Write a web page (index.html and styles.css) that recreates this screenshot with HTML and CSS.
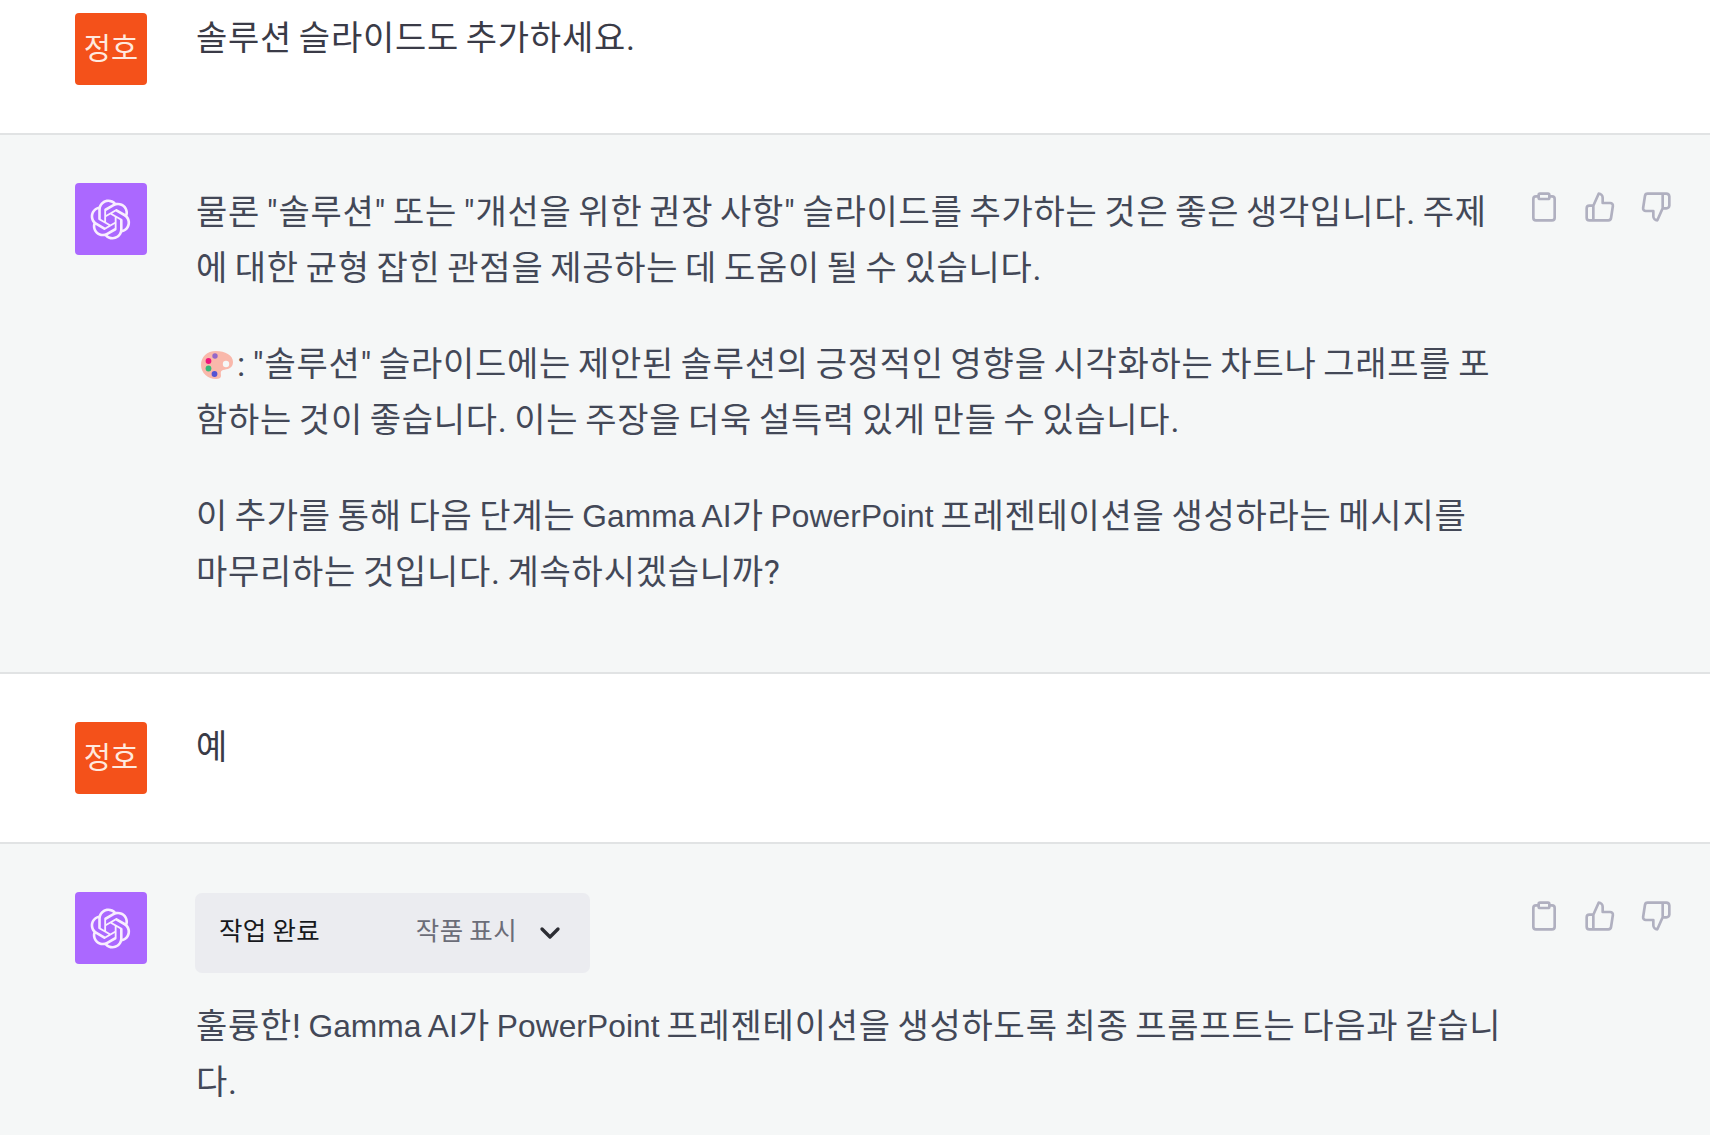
FILE: index.html
```html
<!DOCTYPE html>
<html lang="ko">
<head>
<meta charset="UTF-8">
<meta name="viewport" content="width=device-width,initial-scale=1">
<title>Gamma AI</title>
<link rel="stylesheet" href="styles.css">
</head>
<body>

<!-- shared icons -->
<svg class="defs" width="0" height="0">
	<symbol id="logo" viewBox="0 0 41 41">
		<path fill="currentColor" d="M37.5324 16.8707C37.9808 15.5241 38.1363 14.0974 37.9886 12.6859C37.8409 11.2744 37.3934 9.91076 36.676 8.68622C35.6126 6.83404 33.9882 5.3676 32.0373 4.4985C30.0864 3.62941 27.9098 3.40259 25.8215 3.85078C24.8796 2.7893 23.7219 1.94125 22.4257 1.36341C21.1295 0.785575 19.7249 0.491269 18.3058 0.500197C16.1708 0.495044 14.0893 1.16803 12.3614 2.42214C10.6335 3.67624 9.34853 5.44666 8.6917 7.47815C7.30085 7.76286 5.98686 8.3414 4.8377 9.17505C3.68854 10.0087 2.73073 11.0782 2.02839 12.312C0.956464 14.1591 0.498905 16.2988 0.721698 18.4228C0.944492 20.5467 1.83612 22.5449 3.268 24.1293C2.81966 25.4759 2.66413 26.9026 2.81182 28.3141C2.95951 29.7256 3.40701 31.0892 4.12437 32.3138C5.18791 34.1659 6.8123 35.6322 8.76321 36.5013C10.7141 37.3704 12.8907 37.5973 14.9789 37.1492C15.9208 38.2107 17.0786 39.0587 18.3747 39.6366C19.6709 40.2144 21.0755 40.5087 22.4946 40.4998C24.6307 40.5054 26.7133 39.8321 28.4418 38.5772C30.1704 37.3223 31.4556 35.5506 32.1119 33.5179C33.5027 33.2332 34.8167 32.6547 35.9659 31.821C37.115 30.9874 38.0728 29.9178 38.7752 28.684C39.8458 26.8371 40.3023 24.6979 40.0789 22.5748C39.8556 20.4517 38.9639 18.4544 37.5324 16.8707ZM22.4978 37.8849C20.7443 37.8874 19.0459 37.2733 17.6994 36.1501C17.7601 36.117 17.8666 36.0586 17.936 36.0161L25.9004 31.4156C26.1003 31.3019 26.2663 31.137 26.3813 30.9378C26.4964 30.7386 26.5563 30.5124 26.5549 30.2825V19.0542L29.9213 20.998C29.9389 21.0068 29.9541 21.0198 29.9656 21.0359C29.977 21.052 29.9842 21.0707 29.9867 21.0902V30.3889C29.9842 32.375 29.1946 34.2791 27.7909 35.6841C26.3872 37.0892 24.4838 37.8806 22.4978 37.8849ZM6.39227 31.0064C5.51397 29.4888 5.19742 27.7107 5.49804 25.9832C5.55718 26.0187 5.66048 26.0818 5.73461 26.1244L13.699 30.7248C13.8975 30.8408 14.1233 30.902 14.3532 30.902C14.583 30.902 14.8088 30.8408 15.0073 30.7248L24.731 25.1103V28.9979C24.7321 29.0177 24.7283 29.0376 24.7199 29.0556C24.7115 29.0736 24.6988 29.0893 24.6829 29.1012L16.6317 33.7497C14.9096 34.7416 12.8643 35.0097 10.9447 34.4954C9.02506 33.9811 7.38785 32.7263 6.39227 31.0064ZM4.29707 13.6194C5.17156 12.0998 6.55279 10.9364 8.19885 10.3327C8.19885 10.4013 8.19491 10.5228 8.19491 10.6071V19.808C8.19351 20.0378 8.25334 20.2638 8.36823 20.4629C8.48312 20.6619 8.64893 20.8267 8.84863 20.9404L18.5723 26.5542L15.206 28.4979C15.1894 28.5089 15.1703 28.5155 15.1505 28.5173C15.1307 28.5191 15.1107 28.516 15.0924 28.5082L7.04046 23.8557C5.32135 22.8601 4.06716 21.2235 3.55289 19.3046C3.03862 17.3858 3.30624 15.3413 4.29707 13.6194ZM31.955 20.0556L22.2312 14.4411L25.5976 12.4981C25.6142 12.4872 25.6333 12.4805 25.6531 12.4787C25.6729 12.4769 25.6928 12.4801 25.7111 12.4879L33.7631 17.1364C34.9967 17.849 36.0017 18.8982 36.6606 20.1613C37.3194 21.4244 37.6047 22.849 37.4832 24.2684C37.3617 25.6878 36.8382 27.0432 35.9743 28.1759C35.1103 29.3086 33.9415 30.1717 32.6047 30.6641C32.6047 30.5947 32.6047 30.4733 32.6047 30.3889V21.188C32.6066 20.9586 32.5474 20.7328 32.4332 20.5338C32.319 20.3348 32.154 20.1698 31.955 20.0556ZM35.3055 15.0128C35.2464 14.9765 35.1431 14.9142 35.069 14.8717L27.1045 10.2712C26.906 10.1554 26.6803 10.0943 26.4504 10.0943C26.2206 10.0943 25.9948 10.1554 25.7963 10.2712L16.0726 15.8858V11.9982C16.0715 11.9783 16.0753 11.9585 16.0837 11.9405C16.0921 11.9225 16.1048 11.9068 16.1207 11.8949L24.1719 7.25025C25.4053 6.53903 26.8158 6.19376 28.2383 6.25482C29.6608 6.31589 31.0364 6.78077 32.2044 7.59508C33.3723 8.40939 34.2842 9.53945 34.8334 10.8531C35.3826 12.1667 35.5464 13.6095 35.3055 15.0128ZM14.2424 21.9419L10.8752 19.9981C10.8576 19.9893 10.8423 19.9763 10.8309 19.9602C10.8195 19.9441 10.8122 19.9254 10.8098 19.9058V10.6071C10.8107 9.18295 11.2173 7.78848 11.9819 6.58696C12.7466 5.38544 13.8377 4.42659 15.1275 3.82264C16.4173 3.21869 17.8524 2.99464 19.2649 3.1767C20.6775 3.35876 22.0089 3.93941 23.1034 4.85067C23.0427 4.88379 22.937 4.94215 22.8668 4.98473L14.9024 9.58517C14.7025 9.69878 14.5366 9.86356 14.4215 10.0626C14.3065 10.2616 14.2466 10.4877 14.2479 10.7175L14.2424 21.9419ZM16.071 17.9991L20.4018 15.4978L24.7325 17.9975V22.9985L20.4018 25.4983L16.071 22.9985V17.9991Z"/>
	</symbol>
	<symbol id="clipboard" viewBox="0 0 24 24">
		<path d="M16 4h2a2 2 0 0 1 2 2v14a2 2 0 0 1-2 2H6a2 2 0 0 1-2-2V6a2 2 0 0 1 2-2h2"/>
		<rect x="8" y="2" width="8" height="4" rx="1" ry="1"/>
	</symbol>
	<symbol id="up" viewBox="0 0 24 24">
		<path d="M14 9V5a3 3 0 0 0-3-3l-4 9v11h11.28a2 2 0 0 0 2-1.7l1.38-9a2 2 0 0 0-2-2.3zM7 22H4a2 2 0 0 1-2-2v-7a2 2 0 0 1 2-2h3"/>
	</symbol>
	<symbol id="down" viewBox="0 0 24 24">
		<path d="M10 15v4a3 3 0 0 0 3 3l4-9V2H5.72a2 2 0 0 0-2 1.7l-1.38 9a2 2 0 0 0 2 2.3zm7-13h2.67A2.31 2.31 0 0 1 22 4v7a2.31 2.31 0 0 1-2.33 2H17"/>
	</symbol>
</svg>

<div class="row user first">
	<div class="avatar">정호</div>
	<div class="text"><p>솔루션 슬라이드도 추가하세요.</p></div>
</div>

<div class="row bot">
	<div class="avatar"><svg><use href="#logo"/></svg></div>
	<div class="text">
		<p>물론 "솔루션" 또는 "개선을 위한 권장 사항" 슬라이드를 추가하는 것은 좋은 생각입니다. 주제<br>에 대한 균형 잡힌 관점을 제공하는 데 도움이 될 수 있습니다.</p>
		<p><svg class="palette" viewBox="0 0 34 30">
			<path fill="#f9b8ab" d="M16 1C7 1 1 7 1 15c0 8 7 14 15 14 3 0 5-1 5-3 0-3-1-5 2-6 4-1 10-1 10-8C33 5 25 1 16 1z"/>
			<circle cx="26" cy="14" r="3.2" fill="#f5f7f7"/>
			<circle cx="15" cy="6" r="2.7" fill="#9267c9"/>
			<circle cx="8.500" cy="11" r="2.900" fill="#ef167c"/>
			<circle cx="8.500" cy="18.500" r="2.900" fill="#35b878"/>
			<circle cx="14.500" cy="24" r="2.900" fill="#5454d4"/>
		</svg>: "솔루션" 슬라이드에는 제안된 솔루션의 긍정적인 영향을 시각화하는 차트나 그래프를 포<br>함하는 것이 좋습니다. 이는 주장을 더욱 설득력 있게 만들 수 있습니다.</p>
		<p>이 추가를 통해 다음 단계는 <span class="en">Gamma AI</span>가 <span class="en">PowerPoint</span> 프레젠테이션을 생성하라는 메시지를<br>마무리하는 것입니다. 계속하시겠습니까?</p>
	</div>
	<div class="actions">
		<svg><use href="#clipboard"/></svg>
		<svg><use href="#up"/></svg>
		<svg><use href="#down"/></svg>
	</div>
</div>

<div class="row user">
	<div class="avatar">정호</div>
	<div class="text"><p>예</p></div>
</div>

<div class="row bot last">
	<div class="avatar"><svg><use href="#logo"/></svg></div>
	<div class="text">
		<div class="tool">
			<span>작업 완료</span>
			<span class="show">작품 표시</span>
			<svg viewBox="0 0 24 24"><path d="M6 9l6 6 6-6"/></svg>
		</div>
		<p>훌륭한! <span class="en">Gamma AI</span>가 <span class="en">PowerPoint</span> 프레젠테이션을 생성하도록 최종 프롬프트는 다음과 같습니<br>다.</p>
	</div>
	<div class="actions">
		<svg><use href="#clipboard"/></svg>
		<svg><use href="#up"/></svg>
		<svg><use href="#down"/></svg>
	</div>
</div>

</body>
</html>
```
FILE: styles.css
```css
* {
	box-sizing: border-box;
}
body {
	margin: 0;
	background: #fff;
	color: #434857;
	font-family: Roboto, "Noto Sans CJK KR", sans-serif;
	font-size: 34px;
	font-weight: 400;
	line-height: 56px;
}
.defs {
	display: none;
}
.row {
	display: flex;
	padding: 48px 38px 0 75px;
	border-bottom: 2px solid #e1e3e4;
}
.row.user {
	height: 170px;
	color: #3a3b47;
}
.row.user.first {
	height: 135px;
	padding-top: 13px;
}
.row.bot {
	height: 539px;
	background: #f5f7f7;
}
.row.bot.last {
	height: 291px;
	border-bottom: 0;
}
.avatar {
	display: flex;
	flex: none;
	align-items: center;
	justify-content: center;
	width: 72px;
	height: 72px;
	margin-right: 49px;
	border-radius: 4px;
	background: #f4511a;
	color: #ffe9df;
	font-size: 29.5px;
}
.bot .avatar {
	background: #ab68ff;
	color: #f8eeff;
}
.avatar svg {
	width: 41px;
	height: 41px;
	margin-right: 1px;
}
.text {
	flex: 1;
	white-space: nowrap;
	letter-spacing: .75px;
	word-spacing: -2.4px;
}
.user .text {
	margin-top: -3px;
}
.bot .text {
	padding-top: 1px;
}
.text p {
	margin: 0 0 40px;
}
.en {
	font-family: "Liberation Sans", sans-serif;
	font-size: 31.7px;
	letter-spacing: .1px;
	word-spacing: -1px;
	line-height: 1;
	vertical-align: 1px;
}
.palette {
	width: 34px;
	height: 30px;
	margin: 0 3px 0 4px;
	vertical-align: -4px;
}
.actions {
	display: flex;
	flex: none;
	gap: 24px;
	padding-top: 8px;
}
.actions svg {
	width: 32px;
	height: 32px;
	fill: none;
	stroke: #b0b0c0;
	stroke-width: 2;
	stroke-linecap: round;
	stroke-linejoin: round;
}
.tool {
	display: flex;
	align-items: center;
	width: 395px;
	height: 80px;
	margin: 0 0 25px -1px;
	padding: 0 24px 4px;
	border-radius: 7px;
	background: #ebecf0;
	color: #17181c;
	font-size: 25.5px;
	letter-spacing: .4px;
	word-spacing: -1px;
}
.tool .show {
	margin-left: auto;
	color: #6b6d78;
}
.tool svg {
	width: 32px;
	height: 32px;
	margin: 3px 0 0 17px;
	fill: none;
	stroke: #2c2d33;
	stroke-width: 2.5;
	stroke-linecap: round;
	stroke-linejoin: round;
}
```
